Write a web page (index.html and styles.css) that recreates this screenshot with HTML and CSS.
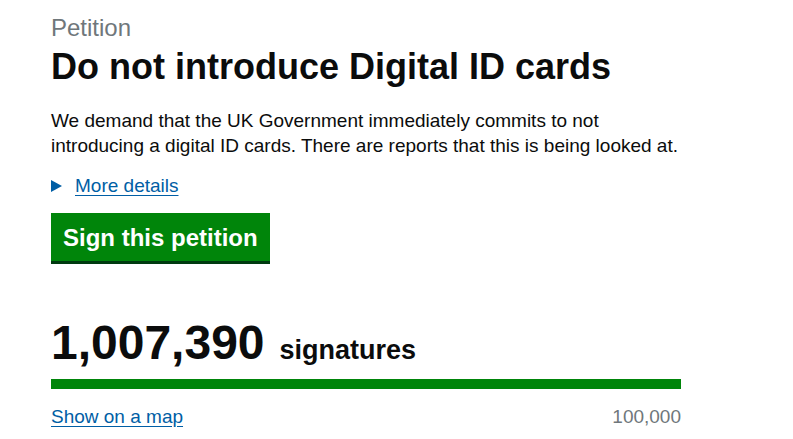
FILE: index.html
```html
<!DOCTYPE html>
<html lang="en">
<head>
<meta charset="utf-8">
<title>Do not introduce Digital ID cards - Petitions</title>
<link rel="stylesheet" href="styles.css">
</head>
<body>
<main class="petition">
  <span class="caption">Petition</span>
  <h1 class="title">Do not introduce Digital ID cards</h1>
  <p class="summary">We demand that the UK Government immediately commits to not introducing a digital ID cards. There are reports that this is being looked at.</p>
  <div class="details">
    <span class="arrow"></span>
    <a class="link" href="#">More details</a>
  </div>
  <a class="button" href="#">Sign this petition</a>
  <div class="count">
    <span class="count-number">1,007,390</span>
    <span class="count-label">signatures</span>
  </div>
  <div class="progress"><div class="progress-fill"></div></div>
  <div class="meta">
    <a class="link" href="#">Show on a map</a>
    <span class="threshold">100,000</span>
  </div>
</main>
</body>
</html>
```

FILE: styles.css
```css
html, body {
  margin: 0;
  padding: 0;
  background: #fff;
}

body {
  font-family: "Liberation Sans", Arial, sans-serif;
  color: #0b0c0c;
}

.petition {
  width: 630px;
  padding: 13px 0 0 51px;
  display: flex;
  flex-direction: column;
  align-items: flex-start;
}

.caption {
  font-size: 24px;
  line-height: 30px;
  color: #6f777b;
}

.title {
  margin: 4px 0 0;
  font-size: 36px;
  line-height: 40px;
  font-weight: 700;
}

.summary {
  margin: 21px 0 0;
  font-size: 19px;
  line-height: 25px;
}

.details {
  margin-top: 15px;
  display: flex;
  align-items: center;
  gap: 13px;
  font-size: 19px;
  line-height: 25px;
}

.arrow {
  width: 0;
  height: 0;
  border-top: 6px solid transparent;
  border-bottom: 6px solid transparent;
  border-left: 11px solid #005ea5;
}

.link {
  color: #005ea5;
  text-decoration: underline;
  text-underline-offset: 3px;
}

.button {
  margin-top: 15px;
  display: inline-block;
  background: #00850a;
  color: #fff;
  font-size: 24px;
  font-weight: 700;
  line-height: 24px;
  padding: 13px 12px 11px;
  text-decoration: none;
  box-shadow: 0 3px 0 #003a10;
}

.count {
  margin-top: 58px;
  display: flex;
  align-items: baseline;
  gap: 15px;
}

.count-number {
  font-size: 48px;
  line-height: 48px;
  font-weight: 700;
}

.count-label {
  font-size: 27px;
  line-height: 27px;
  font-weight: 700;
}

.progress {
  margin-top: 12px;
  width: 630px;
  height: 10px;
  background: #dee0e2;
}

.progress-fill {
  width: 100%;
  height: 100%;
  background: #00850a;
}

.meta {
  margin-top: 15px;
  width: 630px;
  display: flex;
  justify-content: space-between;
  align-items: baseline;
  font-size: 19px;
  line-height: 25px;
}

.threshold {
  color: #6f777b;
}
```
